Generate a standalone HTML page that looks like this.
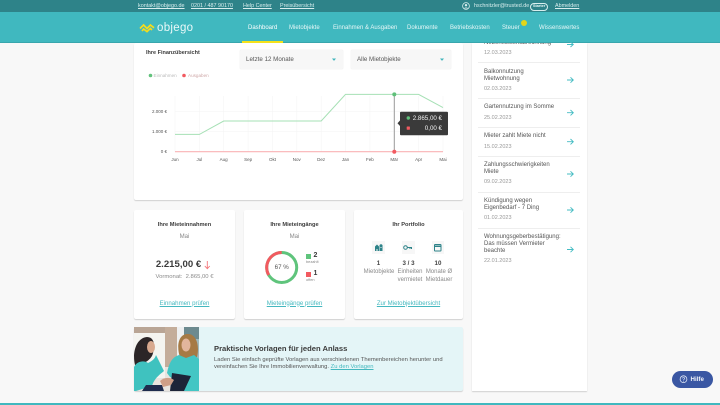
<!DOCTYPE html>
<html lang="de"><head><meta charset="utf-8"><title>objego Dashboard</title>
<style>
html,body{margin:0;padding:0}
body{width:720px;height:405px;overflow:hidden;background:#f8f8f8;position:relative;font-family:"Liberation Sans",sans-serif;color:#444}
.t{position:absolute;white-space:nowrap;line-height:1.2}
.c{transform:translateX(-50%);text-align:center}
.b{position:absolute}
.card{position:absolute;background:#fff;border-radius:2px;box-shadow:0 1px 1px rgba(0,0,0,.16)}
.top{color:#d8eeee;font-size:5.4px;text-decoration:underline;top:3px}
.nav{color:#e6f7f7;font-size:6px;top:24.5px}
.title{font-size:5.7px;font-weight:bold;color:#3c3c3c}
.sub{font-size:6.1px;color:#8a8a8a}
.link{font-size:6.1px;color:#44b8bf;text-decoration:underline}
.item{font-size:6px;color:#555;line-height:7px}
.date{font-size:5.5px;color:#999}
.rule{position:absolute;left:478px;width:102px;height:1px;background:#eee}
.lab{font-size:4.5px;color:#555}
svg{position:absolute;overflow:visible}
</style></head><body>

<div class="b" style="left:0;top:0;width:720px;height:12px;background:#2e8389"></div>
<div class="b" style="left:0;top:12px;width:720px;height:30px;background:#40b8bf"></div>
<div class="b" style="left:0;top:42px;width:720px;height:1px;background:#38a6ad"></div>
<div class="t top" style="left:138px">kontakt@objego.de</div>
<div class="t top" style="left:191px">0201 / 487 90170</div>
<div class="t top" style="left:243px">Help Center</div>
<div class="t top" style="left:280px">Preisübersicht</div>
<svg style="left:462px;top:2px" width="8" height="8" viewBox="0 0 8 8"><circle cx="4" cy="4" r="3.4" fill="none" stroke="#d8eeee" stroke-width=".8"/><circle cx="4" cy="3.2" r="1.2" fill="#d8eeee"/><path d="M2 6.4c.6-1.2 3.4-1.2 4 0" fill="#d8eeee"/></svg>
<div class="t" style="left:474px;top:3px;font-size:5.4px;color:#d8eeee">hschnitzler@trusted.de</div>
<div class="b" style="left:529.500px;top:2.500px;width:16.500px;height:6.200px;border:.5px solid #d8eeee;border-radius:4px"></div>
<div class="t" style="left:533px;top:3.500px;font-size:3.800px;font-weight:bold;color:#e6f7f7">Starter</div>
<div class="t top" style="left:555px">Abmelden</div>

<svg style="left:139px;top:22px" width="16" height="11" viewBox="0 0 16 11"><path d="M1 6.500 4.600 3 8 6.500 11.400 3 15 5.800M3 9 4.600 7 8 9.600 11.400 6.400 13 8" fill="none" stroke="#f5dc1c" stroke-width="1.700"/></svg>
<div class="t" style="left:157px;top:21.500px;font-size:11.500px;letter-spacing:.3px;color:#e9f8f8">objego</div>

<div class="t nav" style="left:248px;color:#fff">Dashboard</div>
<div class="t nav" style="left:289px">Mietobjekte</div>
<div class="t nav" style="left:333px">Einnahmen &amp; Ausgaben</div>
<div class="t nav" style="left:407px">Dokumente</div>
<div class="t nav" style="left:450px">Betriebskosten</div>
<div class="t nav" style="left:502px">Steuer</div>
<div class="t nav" style="left:539px">Wissenswertes</div>
<div class="b" style="left:521px;top:20px;width:6px;height:6px;border-radius:50%;background:#e3d61a"></div>
<div class="b" style="left:242px;top:41px;width:41px;height:2px;background:#f5e21b"></div>

<div class="card" style="left:134px;top:43px;width:329px;height:157px"></div>
<div class="t title" style="left:146px;top:49.500px;font-size:5.500px">Ihre Finanzübersicht</div>
<div class="b" style="left:240px;top:50px;width:103px;height:19px;background:#f7f7f7;border-radius:1px;box-shadow:0 0 1px #ddd"></div>
<div class="t" style="left:246px;top:55.500px;font-size:6.200px;color:#555">Letzte 12 Monate</div>
<div class="b" style="left:351px;top:50px;width:100px;height:19px;background:#f7f7f7;border-radius:1px;box-shadow:0 0 1px #ddd"></div>
<div class="t" style="left:357px;top:55.500px;font-size:6.200px;color:#555">Alle Mietobjekte</div>
<svg style="left:0;top:0" width="720" height="405"><path d="M332 58.500h4l-2 2.400zM440 58.500h4l-2 2.400z" fill="#3fb4bb"/></svg>

<div class="t" style="left:153.500px;top:73px;font-size:4.600px;color:#bbb">Einnahmen</div>
<div class="t" style="left:188px;top:73px;font-size:4.600px;color:#cfa8a8">Ausgaben</div>

<svg style="left:0;top:0" width="720" height="405">
<circle cx="150.500" cy="75.500" r="1.800" fill="#62c27c"/><circle cx="184" cy="75.500" r="1.800" fill="#f25a60"/>
<path d="M175 96V152M199.400 96V152M223.700 96V152M248.100 96V152M272.500 96V152M296.800 96V152M321.200 96V152M345.500 96V152M369.900 96V152M394.300 96V152M418.600 96V152M443 96V152M175 111.700H443M175 131.700H443" stroke="#f5f5f5" stroke-width=".6" fill="none"/>
<path d="M175 134.400H199.400L223.700 121H321.200L345.500 94.400H418.600L443 107.600" fill="none" stroke="#a6e0b5" stroke-width="1"/>
<path d="M175 151.700H443" stroke="#f9b2b5" stroke-width="1.100"/>
<path d="M394.300 94.400V151.700" stroke="#9a9a9a" stroke-width="1"/>
<circle cx="394.300" cy="94.400" r="2" fill="#5fc07a"/><circle cx="394.300" cy="151.700" r="2" fill="#f25a60"/>
<rect x="400" y="111.700" width="48" height="23.500" rx="1" fill="#3a3a3a"/><path d="M400 120.500 397.500 123.300 400 126z" fill="#3a3a3a"/>
<circle cx="408.300" cy="118" r="1.700" fill="#5fc07a"/><rect x="406.700" y="126.500" width="3.200" height="3.200" rx=".6" fill="#f25a60"/>
</svg>
<div class="t" style="right:278px;top:114.500px;font-size:6.200px;color:#f2f2f2">2.865,00 €</div>
<div class="t" style="right:278px;top:124.800px;font-size:6.200px;color:#f2f2f2">0,00 €</div>
<div class="t lab" style="right:553px;top:109px">2.000 €</div>
<div class="t lab" style="right:553px;top:129px">1.000 €</div>
<div class="t lab" style="right:553px;top:149px">0 €</div>
<div class="t lab c" style="left:175px;top:156.500px">Jun</div>
<div class="t lab c" style="left:199.400px;top:156.500px">Jul</div>
<div class="t lab c" style="left:223.700px;top:156.500px">Aug</div>
<div class="t lab c" style="left:248.100px;top:156.500px">Sep</div>
<div class="t lab c" style="left:272.500px;top:156.500px">Okt</div>
<div class="t lab c" style="left:296.800px;top:156.500px">Nov</div>
<div class="t lab c" style="left:321.200px;top:156.500px">Dez</div>
<div class="t lab c" style="left:345.500px;top:156.500px">Jan</div>
<div class="t lab c" style="left:369.900px;top:156.500px">Feb</div>
<div class="t lab c" style="left:394.300px;top:156.500px">Mär</div>
<div class="t lab c" style="left:418.600px;top:156.500px">Apr</div>
<div class="t lab c" style="left:443px;top:156.500px">Mai</div>

<div class="card" style="left:134px;top:210px;width:101px;height:109px"></div>
<div class="t title c" style="left:184.500px;top:222px">Ihre Mieteinnahmen</div>
<div class="t sub c" style="left:184.500px;top:232.500px">Mai</div>
<div class="t c" style="left:178.500px;top:258.500px;font-size:9.600px;font-weight:bold;color:#3a3a3a">2.215,00 €</div>
<svg style="left:0;top:0" width="720" height="405"><path d="M207.300 261V268.500M204.800 266 207.300 268.700 209.800 266" fill="none" stroke="#f4777b" stroke-width=".9"/></svg>
<div class="t sub c" style="left:184.500px;top:274px;font-size:5.900px">Vormonat:&nbsp; 2.865,00 €</div>
<div class="t link c" style="left:184.500px;top:299.500px">Einnahmen prüfen</div>

<div class="card" style="left:244px;top:210px;width:101px;height:109px"></div>
<div class="t title c" style="left:294.500px;top:222px">Ihre Mieteingänge</div>
<div class="t sub c" style="left:294.500px;top:232.500px">Mai</div>
<svg style="left:264px;top:249.500px" width="36" height="36" viewBox="0 0 36 36">
<circle cx="17.700" cy="17.500" r="15" fill="none" stroke="#5fc47c" stroke-width="3"/>
<path d="M17.700 2.500A15 15 0 0 0 4.700 25" fill="none" stroke="#f25a60" stroke-width="3"/></svg>
<div class="t c" style="left:281.700px;top:263.500px;font-size:6.200px;color:#555">67 %</div>
<div class="b" style="left:306px;top:253.500px;width:5px;height:5px;background:#5fc47c"></div>
<div class="t" style="left:313.500px;top:251.500px;font-size:7px;font-weight:bold;color:#3a3a3a">2</div>
<div class="t" style="left:306px;top:260px;font-size:3.900px;color:#888">bezahlt</div>
<div class="b" style="left:306px;top:271.500px;width:5px;height:5px;background:#f25a60"></div>
<div class="t" style="left:313.500px;top:269.500px;font-size:7px;font-weight:bold;color:#3a3a3a">1</div>
<div class="t" style="left:306px;top:278px;font-size:3.900px;color:#888">offen</div>
<div class="t link c" style="left:294.500px;top:299.500px">Mieteingänge prüfen</div>

<div class="card" style="left:354px;top:210px;width:109px;height:109px"></div>
<div class="t title c" style="left:408.500px;top:222px">Ihr Portfolio</div>
<div class="b" style="left:372px;top:241px;width:13px;height:13px;background:#f7f7f7"></div>
<div class="b" style="left:402px;top:241px;width:13px;height:13px;background:#f7f7f7"></div>
<div class="b" style="left:432px;top:241px;width:12px;height:13px;background:#f7f7f7"></div>
<svg style="left:0;top:0" width="720" height="405">
<path d="M375 251V246.500L377 244.500 379 246.500V251ZM379.500 251V245L381 244 382.500 245V251Z" fill="#2e8389"/>
<path d="M376.500 251V249H377.500V251ZM380.500 247H381.500V248H380.500Z" fill="#f7f7f7"/>
<circle cx="405.500" cy="247.500" r="1.800" fill="none" stroke="#2e8389" stroke-width="1"/><path d="M407.300 247.500H412M410 247.500V249M411.500 247.500V249" stroke="#2e8389" stroke-width="1" fill="none"/>
<rect x="434.500" y="244.500" width="6.500" height="6.500" rx=".6" fill="none" stroke="#2e8389" stroke-width="1"/><path d="M434.500 245.500H441V247H434.500Z" fill="#2e8389"/>
</svg>
<div class="t c" style="left:378.500px;top:259.500px;font-size:6.200px;font-weight:bold;color:#444">1</div>
<div class="t c" style="left:408.500px;top:259.500px;font-size:6.200px;font-weight:bold;color:#444">3 / 3</div>
<div class="t c" style="left:438px;top:259.500px;font-size:6.200px;font-weight:bold;color:#444">10</div>
<div class="t sub c" style="left:379px;top:269px;line-height:7.500px;font-size:6px">Mietobjekte</div>
<div class="t sub c" style="left:410px;top:269px;line-height:7.500px;font-size:6px">Einheiten<br>vermietet</div>
<div class="t sub c" style="left:439px;top:269px;line-height:7.500px;font-size:6px">Monate Ø<br>Mietdauer</div>
<div class="t link c" style="left:408.500px;top:299.500px">Zur Mietobjektübersicht</div>

<div class="card" style="left:134px;top:327px;width:329px;height:64px;background:#e4f5f7;overflow:hidden"></div>
<div class="b" style="left:134px;top:327px;width:65px;height:64px;overflow:hidden">
<svg style="left:0;top:0" width="65" height="64" viewBox="0 0 65 64">
<rect x="0" y="0" width="65" height="64" fill="#e8e4e0"/>
<rect x="0" y="0" width="65" height="6" fill="#b9a595"/>
<rect x="31" y="0" width="12" height="40" fill="#c4ad9a"/>
<rect x="43" y="0" width="11" height="64" fill="#eef0f1"/>
<rect x="50" y="0" width="15" height="12" fill="#6d8a8f"/>
<rect x="58" y="12" width="7" height="52" fill="#9fb9bd"/>
<rect x="0" y="6" width="31" height="45" fill="#f4f4f0"/>
<path d="M1 38C-2 26 2 11 13 10 21 10 21 20 19 26 18 32 10 38 1 38Z" fill="#2b2527"/>
<ellipse cx="17" cy="20" rx="4" ry="6" fill="#d8a98f"/>
<path d="M0 40C3 34 10 33 14 36 18 34 21 32 22 28L30 44C25 48 20 52 18 59L2 64H0Z" fill="#3fc2bf"/>
<path d="M12 58H28L30 64H8Z" fill="#1e2b4d"/>
<path d="M46 30C43 22 43 8 53 7 62 6 66 18 63 30L55 33Z" fill="#a67a45"/>
<ellipse cx="52" cy="18" rx="4.500" ry="6.500" fill="#e2b59c"/>
<path d="M33 46C35 36 38 30 45 28L52 31 60 28 65 32V64H50L45 54 36 50Z" fill="#43c6c4"/>
<path d="M38 46 57 49 50 64H36Z" fill="#1d2438"/>
<path d="M26 54C30 50 36 50 40 53L37 58 29 60Z" fill="#cf9f88"/>
</svg></div>
<div class="t" style="left:214px;top:343.500px;font-size:7.600px;font-weight:bold;color:#3a3a3a">Praktische Vorlagen für jeden Anlass</div>
<div class="t" style="left:214px;top:356.500px;font-size:5.850px;line-height:7.500px;color:#555">Laden Sie einfach geprüfte Vorlagen aus verschiedenen Themenbereichen herunter und<br>vereinfachen Sie Ihre Immobilienverwaltung. <span style="color:#44b8bf;text-decoration:underline">Zu den Vorlagen</span></div>

<div class="card" style="left:472px;top:43px;width:114.500px;height:348px;border-radius:0"></div>
<div style="position:absolute;left:472px;top:43px;width:114.500px;height:19px;overflow:hidden"><div class="t item" style="left:12px;top:-3px">Nebenkostenabrechnung</div><div class="t date" style="left:12px;top:6.500px">12.03.2023</div></div>
<div class="rule" style="top:62px"></div>
<div class="t item" style="left:484px;top:68.500px">Balkonnutzung<br>Mietwohnung</div><div class="t date" style="left:484px;top:85.500px">02.03.2023</div>
<div class="rule" style="top:98px"></div>
<div class="t item" style="left:484px;top:104px">Gartennutzung im Somme</div><div class="t date" style="left:484px;top:114.500px">25.02.2023</div>
<div class="rule" style="top:127px"></div>
<div class="t item" style="left:484px;top:133px">Mieter zahlt Miete nicht</div><div class="t date" style="left:484px;top:143.500px">15.02.2023</div>
<div class="rule" style="top:156px"></div>
<div class="t item" style="left:484px;top:162px">Zahlungsschwierigkeiten<br>Miete</div><div class="t date" style="left:484px;top:179px">09.02.2023</div>
<div class="rule" style="top:192px"></div>
<div class="t item" style="left:484px;top:198px">Kündigung wegen<br>Eigenbedarf - 7 Ding</div><div class="t date" style="left:484px;top:215px">01.02.2023</div>
<div class="rule" style="top:228px"></div>
<div class="t item" style="left:484px;top:234px">Wohnungsgeberbestätigung:<br>Das müssen Vermieter<br>beachte</div><div class="t date" style="left:484px;top:258px">22.01.2023</div>
<svg style="left:0;top:0" width="720" height="405">
<g fill="none" stroke="#45bcc3" stroke-width=".9">
<path d="M567 44.500H573M570.500 42 573.300 44.500 570.500 47"/>
<path d="M567 80H573M570.500 77.300 573.300 80 570.500 82.700"/>
<path d="M567 112.700H573M570.500 110 573.300 112.700 570.500 115.400"/>
<path d="M567 141.700H573M570.500 139 573.300 141.700 570.500 144.400"/>
<path d="M567 174H573M570.500 171.300 573.300 174 570.500 176.700"/>
<path d="M567 210H573M570.500 207.300 573.300 210 570.500 212.700"/>
<path d="M567 249.500H573M570.500 246.800 573.300 249.500 570.500 252.200"/>
</g></svg>

<div class="b" style="left:672px;top:371px;width:41px;height:17px;border-radius:9px;background:#3a57a3"></div>
<svg style="left:679px;top:375px" width="9" height="9" viewBox="0 0 9 9"><circle cx="4.500" cy="4.200" r="3.400" fill="none" stroke="#dfe6f5" stroke-width=".8"/><path d="M3.300 3.400C3.500 2.200 5.800 2.300 5.700 3.500 5.600 4.300 4.500 4.300 4.500 5.300" fill="none" stroke="#dfe6f5" stroke-width=".7"/><circle cx="4.500" cy="6.200" r=".4" fill="#dfe6f5"/></svg>
<div class="t" style="left:690.500px;top:376px;font-size:6.200px;font-weight:bold;color:#f2f5fb">Hilfe</div>

<div class="b" style="left:0;top:403px;width:720px;height:2px;background:#40b8bf"></div>
</body></html>
